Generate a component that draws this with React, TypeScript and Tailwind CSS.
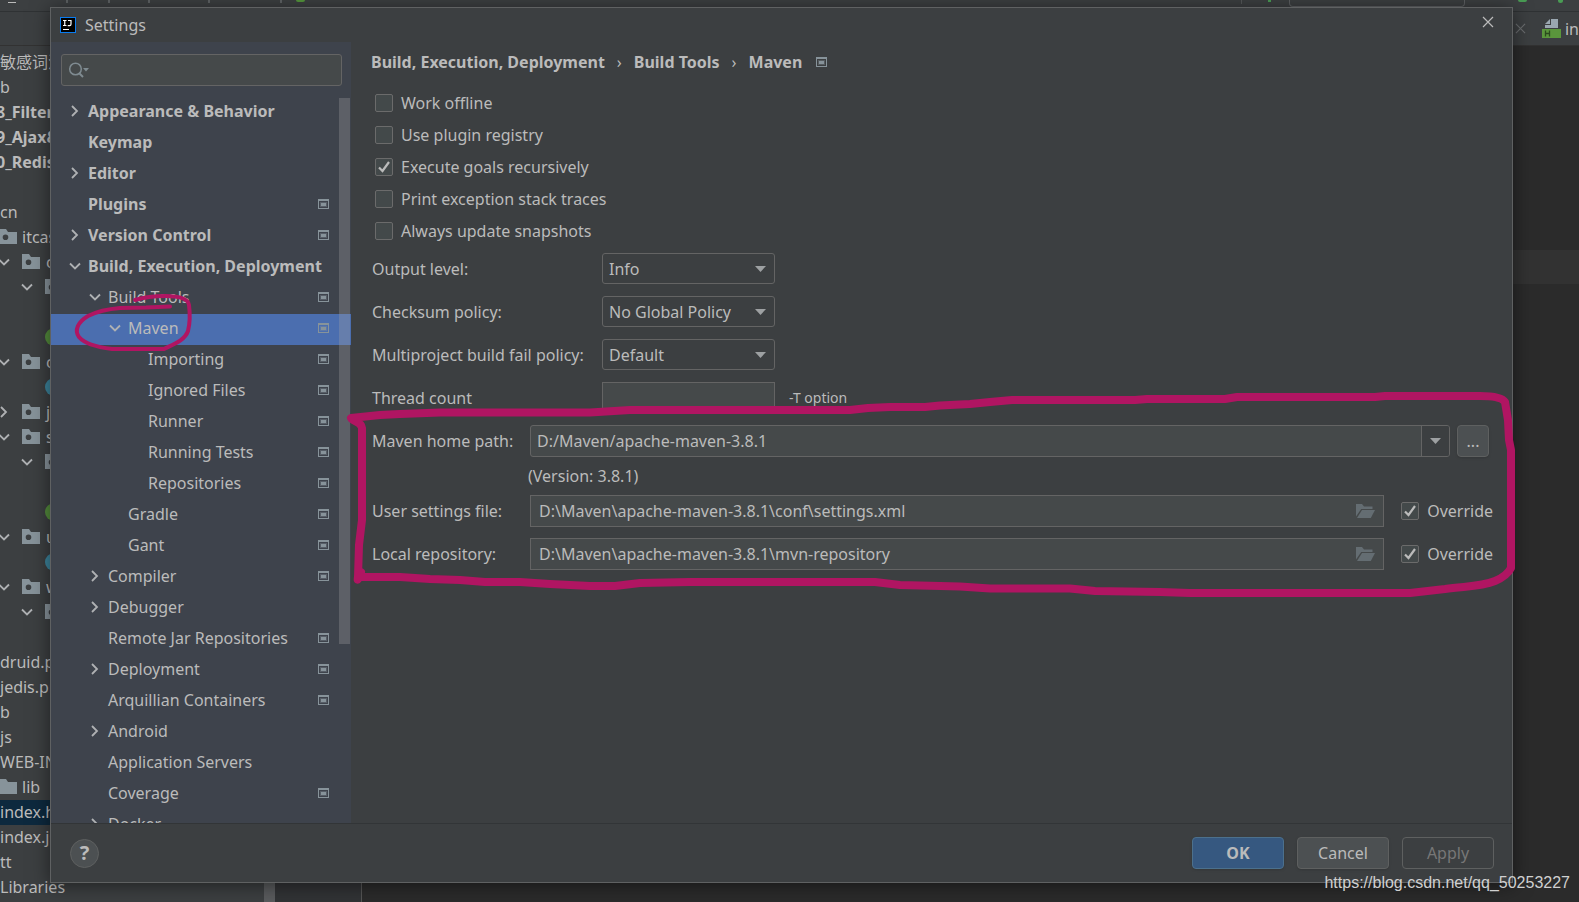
import type { ReactNode } from "react";

type TreeItem = {
  label: string;
  level: 0 | 1 | 2 | 3;
  state?: "open" | "closed";
  badge?: boolean;
  selected?: boolean;
};

const settingsTree: TreeItem[] = [
  { label: "Appearance & Behavior", level: 0, state: "closed" },
  { label: "Keymap", level: 0 },
  { label: "Editor", level: 0, state: "closed" },
  { label: "Plugins", level: 0, badge: true },
  { label: "Version Control", level: 0, state: "closed", badge: true },
  { label: "Build, Execution, Deployment", level: 0, state: "open" },
  { label: "Build Tools", level: 1, state: "open", badge: true },
  { label: "Maven", level: 2, state: "open", badge: true, selected: true },
  { label: "Importing", level: 3, badge: true },
  { label: "Ignored Files", level: 3, badge: true },
  { label: "Runner", level: 3, badge: true },
  { label: "Running Tests", level: 3, badge: true },
  { label: "Repositories", level: 3, badge: true },
  { label: "Gradle", level: 2, badge: true },
  { label: "Gant", level: 2, badge: true },
  { label: "Compiler", level: 1, state: "closed", badge: true },
  { label: "Debugger", level: 1, state: "closed" },
  { label: "Remote Jar Repositories", level: 1, badge: true },
  { label: "Deployment", level: 1, state: "closed", badge: true },
  { label: "Arquillian Containers", level: 1, badge: true },
  { label: "Android", level: 1, state: "closed" },
  { label: "Application Servers", level: 1 },
  { label: "Coverage", level: 1, badge: true },
  { label: "Docker", level: 1, state: "closed" },
];

const levelPadding = ["pl-4", "pl-9", "pl-14", "pl-19"];

type ProjectItem = {
  kind: "text" | "bold" | "root" | "package" | "nested" | "leaf";
  label?: string;
  state?: "open" | "closed";
  color?: string;
  selected?: boolean;
};

const projectTree: ProjectItem[] = [
  { kind: "text", label: "敏感词汇" },
  { kind: "text", label: "b" },
  { kind: "bold", label: "8_Filter" },
  { kind: "bold", label: "9_Ajax&" },
  { kind: "bold", label: "0_Redis" },
  { kind: "text" },
  { kind: "text", label: "cn" },
  { kind: "root", label: "itcast" },
  { kind: "package", label: "c", state: "open" },
  { kind: "nested", state: "open" },
  { kind: "text" },
  { kind: "leaf", color: "bg-[#548c3c]" },
  { kind: "package", label: "c", state: "open" },
  { kind: "leaf", color: "bg-[#3c849c]" },
  { kind: "package", label: "j", state: "closed" },
  { kind: "package", label: "s", state: "open" },
  { kind: "nested", state: "open" },
  { kind: "text" },
  { kind: "leaf", color: "bg-[#548c3c]" },
  { kind: "package", label: "u", state: "open" },
  { kind: "leaf", color: "bg-[#3c849c]" },
  { kind: "package", label: "w", state: "open" },
  { kind: "nested", state: "open" },
  { kind: "text" },
  { kind: "text", label: "druid.properties" },
  { kind: "text", label: "jedis.properties" },
  { kind: "text", label: "b" },
  { kind: "text", label: "js" },
  { kind: "text", label: "WEB-INF" },
  { kind: "root", label: "lib" },
  { kind: "text", label: "index.html", selected: true },
  { kind: "text", label: "index.jsp" },
  { kind: "text", label: "tt" },
  { kind: "text", label: "Libraries" },
];

function Chevron({ state }: { state: "open" | "closed" }) {
  return (
    <svg viewBox="0 0 16 16" className="h-4 w-4 shrink-0" fill="none" stroke="#afb1b3" strokeWidth="1.8">
      {state === "open" ? <path d="M3 5.5 8 10.5 13 5.5" /> : <path d="M5 3 10 8 5 13" />}
    </svg>
  );
}

function ProjectBadge() {
  return (
    <svg viewBox="0 0 11 10" className="h-[10px] w-[11px] shrink-0" aria-hidden="true">
      <path fill="#87939a" fillRule="evenodd" d="M0 0h11v10H0zM1 2v7h9V2z" />
      <path fill="#87939a" fillOpacity="0.35" d="M2 3h7v5H2z" />
      <path fill="#87939a" d="M3 4h5v3H3z" />
    </svg>
  );
}

function FolderIcon({ dot = true }: { dot?: boolean }) {
  return (
    <svg viewBox="0 0 18 15" className="h-[15px] w-[18px] shrink-0" aria-hidden="true">
      <path
        fill="#87939a"
        fillRule="evenodd"
        d={
          dot
            ? "M0 0h7l2 3h9v12H0zM6.5 5.5a2.8 2.8 0 1 0 0 5.6 2.8 2.8 0 0 0 0-5.6z"
            : "M0 0h7l2 3h9v12H0z"
        }
      />
    </svg>
  );
}

function OpenFolderIcon() {
  return (
    <svg viewBox="0 0 19 15" className="h-[15px] w-[19px] shrink-0" aria-hidden="true">
      <path fill="#646d72" d="M0 1h6l2 2.5h8.5V6H5.200L0 13.500z" />
      <path fill="#646d72" d="M6 7h13l-4.200 8H1z" />
    </svg>
  );
}

function DownTriangle() {
  return (
    <svg viewBox="0 0 11 6" className="h-[6px] w-[11px]" aria-hidden="true">
      <path fill="#9da0a2" d="M0 0h11L5.500 6z" />
    </svg>
  );
}

function CloseIcon({ className }: { className?: string }) {
  return (
    <svg viewBox="0 0 12 12" className={className} fill="none" stroke="currentColor" strokeWidth="1.200">
      <path d="M1 1 11 11M11 1 1 11" />
    </svg>
  );
}

function ProjectRow({ item }: { item: ProjectItem }) {
  const row = "flex h-[25px] shrink-0 items-center whitespace-nowrap pb-[2px]";
  switch (item.kind) {
    case "root":
      return (
        <div className={`${row} -ml-px gap-[5px]`}>
          <FolderIcon dot={item.label !== "lib"} />
          {item.label}
        </div>
      );
    case "package":
      return (
        <div className={`${row} -ml-1 gap-[6px]`}>
          <div className="flex items-center gap-[10px]">
            <Chevron state={item.state ?? "open"} />
            <FolderIcon />
          </div>
          {item.label}
        </div>
      );
    case "nested":
      return (
        <div className={`${row} gap-[10px] pl-[19px]`}>
          <Chevron state="open" />
          <FolderIcon />
        </div>
      );
    case "leaf":
      return (
        <div className={`${row} pl-[45px]`}>
          <span className={`h-[18px] w-[18px] rounded-full ${item.color}`} />
        </div>
      );
    case "bold":
      return (
        <div className={`${row} font-bold`}>
          <span className="-ml-1">{item.label}</span>
        </div>
      );
    default:
      return <div className={`${row} ${item.selected ? "bg-[#0d293e]" : ""}`}>{item.label}</div>;
  }
}

function IdeBackground() {
  return (
    <div className="flex h-full flex-col">
      <div className="flex h-3 shrink-0 items-start border-b border-[#2f3234] bg-[#3c3f41]">
        <span className="mt-[2px] ml-2 h-px w-2 bg-[#bbbbbb]" />
        <span className="ml-[50px] h-[3px] w-[2px] bg-[#5f6365]" />
        <span className="ml-10 h-[3px] w-[2px] bg-[#5f6365]" />
        <span className="ml-[38px] h-[3px] w-[2px] bg-[#5f6365]" />
        <span className="ml-[58px] h-[3px] w-[2px] bg-[#5f6365]" />
        <span className="ml-[70px] h-[3px] w-[2px] bg-[#5f6365]" />
        <span className="ml-[14px] h-[2px] w-[9px] rounded-b-full bg-[#54953c]" />
        <span className="flex-1" />
        <span className="h-1 w-px bg-[#55585a]" />
        <span className="ml-[26px] h-[2px] w-[3px] bg-[#499c54]" />
        <span className="ml-[18px] h-[7px] w-[176px] rounded-b-sm border border-t-0 border-[#5e6163]" />
        <span className="ml-[53px] h-[2px] w-[9px] rounded-b-full bg-[#499c54]" />
        <span className="mr-4 ml-[31px] h-[3px] w-[5px] rounded-b-full bg-[#499c54]" />
      </div>
      <div className="flex h-[34px] shrink-0 items-center justify-end overflow-hidden border-b border-[#323232] bg-[#3c3f41]">
        <CloseIcon className="h-[11px] w-[11px] text-[#6b6e70]" />
        <svg viewBox="0 0 19 19" className="ml-4 h-[19px] w-[19px]" aria-hidden="true">
          <path fill="#9aa7b0" d="M9 0h7v9H3V6h6z" />
          <path fill="#9aa7b0" d="M8 0v5H3z" />
          <path fill="#5a963c" d="M0 10h19v9H0z" />
          <path stroke="#2c4a1e" strokeWidth="1.300" d="M3.500 11.500v6M7.500 11.500v6M3.500 14.500h4" />
        </svg>
        <span className="ml-1">in</span>
      </div>
      <div className="flex min-h-0 flex-1">
        <div className="flex w-[264px] flex-col overflow-hidden bg-[#3c3f41] pt-1">
          {projectTree.map((item, i) => (
            <ProjectRow key={i} item={item} />
          ))}
        </div>
        <div className="w-[11px] bg-[#595b5d]" />
        <div className="w-[87px] border-r border-[#555555] bg-[#313335]" />
        <div className="flex-1 bg-[#2b2b2b] pt-[204px]">
          <div className="h-[34px] bg-[#323232]" />
        </div>
      </div>
    </div>
  );
}

function SettingsRow({ item }: { item: TreeItem }) {
  return (
    <li
      className={`flex h-[31px] shrink-0 items-center gap-[5px] pr-[22px] pb-[3px] whitespace-nowrap ${levelPadding[item.level]} ${
        item.level === 0 ? "font-bold" : ""
      } ${item.selected ? "bg-[#4b6eaf]" : ""}`}
    >
      {item.state ? <Chevron state={item.state} /> : <span className="w-4 shrink-0" />}
      <span className="flex-1">{item.label}</span>
      {item.badge && <ProjectBadge />}
    </li>
  );
}

function CheckOption({ label, checked = false }: { label: string; checked?: boolean }) {
  return (
    <label className="flex h-8 items-center gap-2">
      <span className="grid shrink-0 place-items-center">
        <input
          type="checkbox"
          defaultChecked={checked}
          className="peer col-start-1 row-start-1 h-[18px] w-[18px] appearance-none rounded-[2px] border border-[#6b6b6b] bg-[#43494a]"
        />
        <svg
          viewBox="0 0 12 12"
          className="pointer-events-none invisible col-start-1 row-start-1 h-3 w-3 peer-checked:visible"
          fill="none"
          stroke="#bbbbbb"
          strokeWidth="2.200"
        >
          <path d="M1 6.500 4.500 10 11 1" />
        </svg>
      </span>
      {label}
    </label>
  );
}

function FormRow({ id, label, wide, children }: { id: string; label: string; wide?: boolean; children: ReactNode }) {
  return (
    <div className="flex h-[43px] items-center">
      <label htmlFor={id} className={`shrink-0 ${wide ? "w-[230px]" : "w-[158px]"}`}>
        {label}
      </label>
      {children}
    </div>
  );
}

function SelectField({ id, value }: { id: string; value: string }) {
  return (
    <div className="grid w-[173px] items-center">
      <select
        id={id}
        defaultValue={value}
        className="col-start-1 row-start-1 h-[31px] w-full appearance-none rounded-[3px] border border-[#646464] bg-[#3c3f41] pl-[6px]"
      >
        <option>{value}</option>
      </select>
      <span className="pointer-events-none col-start-1 row-start-1 mr-[9px] justify-self-end">
        <DownTriangle />
      </span>
    </div>
  );
}

function PathField({ id, value }: { id: string; value: string }) {
  return (
    <div className="mr-[17px] flex h-8 min-w-0 flex-1 items-center border border-[#646464] bg-[#45494a] pr-2">
      <input id={id} defaultValue={value} className="min-w-0 flex-1 bg-transparent pl-2 outline-none" />
      <button type="button" aria-label="Browse">
        <OpenFolderIcon />
      </button>
    </div>
  );
}

function MavenPanel() {
  return (
    <main className="min-w-0 flex-1 pt-[6px] pr-[19px] pl-[21px]">
      <nav className="-ml-px flex h-7 items-center gap-3 font-bold">
        <span>Build, Execution, Deployment</span>
        <span className="font-normal">›</span>
        <span>Build Tools</span>
        <span className="font-normal">›</span>
        <span>Maven</span>
        <span className="ml-[2px]">
          <ProjectBadge />
        </span>
      </nav>
      <div className="mt-[11px] ml-[3px]">
        <CheckOption label="Work offline" />
        <CheckOption label="Use plugin registry" />
        <CheckOption label="Execute goals recursively" checked />
        <CheckOption label="Print exception stack traces" />
        <CheckOption label="Always update snapshots" />
      </div>
      <FormRow id="output" label="Output level:" wide>
        <SelectField id="output" value="Info" />
      </FormRow>
      <FormRow id="checksum" label="Checksum policy:" wide>
        <SelectField id="checksum" value="No Global Policy" />
      </FormRow>
      <FormRow id="fail" label="Multiproject build fail policy:" wide>
        <SelectField id="fail" value="Default" />
      </FormRow>
      <FormRow id="threads" label="Thread count" wide>
        <input id="threads" className="h-[31px] w-[173px] border border-[#646464] bg-[#45494a] pl-[6px]" />
        <span className="ml-[14px] text-sm">-T option</span>
      </FormRow>
      <FormRow id="home" label="Maven home path:">
        <div className="flex h-8 min-w-0 flex-1 overflow-hidden rounded-[3px] border border-[#646464] bg-[#45494a]">
          <input
            id="home"
            defaultValue="D:/Maven/apache-maven-3.8.1"
            className="min-w-0 flex-1 bg-transparent pl-[6px] outline-none"
          />
          <button
            type="button"
            aria-label="Show paths"
            className="flex w-7 items-center justify-center border-l border-[#646464] bg-[#3c3f41]"
          >
            <DownTriangle />
          </button>
        </div>
        <button
          type="button"
          className="mr-1 ml-[7px] h-8 w-8 rounded-[4px] border border-[#5e6060] bg-[#4c5052] shadow-sm"
        >
          ...
        </button>
      </FormRow>
      <p className="flex h-[27px] items-center pl-[156px]">(Version: 3.8.1)</p>
      <FormRow id="user-settings" label="User settings file:">
        <PathField id="user-settings" value="D:\Maven\apache-maven-3.8.1\conf\settings.xml" />
        <CheckOption label="Override" checked />
      </FormRow>
      <FormRow id="local-repo" label="Local repository:">
        <PathField id="local-repo" value="D:\Maven\apache-maven-3.8.1\mvn-repository" />
        <CheckOption label="Override" checked />
      </FormRow>
    </main>
  );
}

function SettingsDialog() {
  return (
    <div
      role="dialog"
      aria-label="Settings"
      className="absolute top-[7px] right-[66px] bottom-[19px] left-[50px] flex flex-col border border-[#5f6162] bg-[#3c3f41] shadow-[0_2px_18px_rgba(0,0,0,0.5)]"
    >
      <header className="flex h-[34px] shrink-0 items-center pr-[18px] pl-[9px]">
        <svg viewBox="0 0 16 16" className="h-4 w-4" aria-hidden="true">
          <path fill="#0a7cf0" d="M0 0h16v16H0z" />
          <path fill="#000000" d="M1 1h14v14H1z" />
          <path stroke="#ffffff" strokeWidth="1.200" fill="none" d="M3 3.500h3.500M4.750 3.500v5M3 8.500h3.500M8 3.500h3v3.700q0 1.400-1.400 1.400H7.700M3 12.500h6" />
        </svg>
        <h1 className="ml-[9px] flex-1">Settings</h1>
        <button type="button" aria-label="Close" className="pb-[6px]">
          <CloseIcon className="h-3 w-3 text-[#bbbbbb]" />
        </button>
      </header>
      <div className="flex min-h-0 flex-1">
        <aside className="flex w-[300px] shrink-0 flex-col bg-[#3e434c]">
          <div className="mr-[9px] ml-[10px] mt-3 flex h-8 shrink-0 items-center rounded-[3px] border border-[#646464] bg-[#45494a] pl-[6px]">
            <svg viewBox="0 0 22 16" className="h-4 w-[22px] shrink-0" fill="none" aria-hidden="true">
              <circle cx="7.500" cy="7" r="5.800" stroke="#7f8b91" strokeWidth="1.500" />
              <path stroke="#7f8b91" strokeWidth="2" d="M11 11l4 4" />
              <path fill="#7f8b91" d="M15 6h6l-3 3.500z" />
            </svg>
            <input aria-label="Search settings" className="min-w-0 flex-1 bg-transparent outline-none" />
          </div>
          <div className="relative mt-[11px] min-h-0 flex-1 overflow-hidden">
            <ul>
              {settingsTree.map((item) => (
                <SettingsRow key={item.label} item={item} />
              ))}
            </ul>
            <div className="absolute top-px right-px h-[546px] w-[11px] bg-[#a6a6a6]/30" />
          </div>
        </aside>
        <MavenPanel />
      </div>
      <footer className="flex h-[59px] shrink-0 items-center gap-[13px] border-t border-[#323537] pr-[18px] pl-[19px]">
        <button
          type="button"
          className="mr-auto h-[29px] w-[29px] rounded-full border border-[#5e6060] bg-[#4c5052] text-xl leading-6 font-bold"
        >
          ?
        </button>
        <button type="button" className="h-8 w-[92px] rounded-[4px] border border-[#4c708c] bg-[#365880] font-bold shadow-sm">
          OK
        </button>
        <button type="button" className="h-8 w-[92px] rounded-[4px] border border-[#5e6060] bg-[#4c5052] shadow-sm">
          Cancel
        </button>
        <button type="button" disabled className="h-8 w-[92px] rounded-[4px] border border-[#5e6060] text-[#777777]">
          Apply
        </button>
      </footer>
    </div>
  );
}

// hand-drawn highlights over the Maven node and the path fields
function Markup() {
  return (
    <svg
      className="pointer-events-none absolute inset-0 h-full w-full"
      fill="none"
      stroke="#b01562"
      strokeLinecap="round"
      strokeLinejoin="round"
      aria-hidden="true"
    >
      <path
        strokeWidth="4"
        d="M135 300 C145 297 158 296 165 296 C178 296 188 298 189 305 C190 313 190 323 188 331 C185 340 174 344 164 349 H112 C96 347 84 343 79 337 C74 330 78 322 88 316 C98 311 108 309 120 308 L146 307.500 L170 306.500"
      />
      <path
        strokeWidth="8"
        d="M361 572 C358 578 357 583 358 577 L359 545 L362 520 V428 C361 421 353 422 351 418 L380 415 L400 414 L440 412.500 H590 L630 410 H850 L868 408 L890 407 H925 L940 405.500 L970 404 L990 402 L1012 400 H1135 L1147 399 H1225 L1237 397 H1375 L1385 396 H1480 Q1501 396 1505 402 L1508 420 L1509 440 L1511 450 V568 Q1507 576 1495 581 C1480 587 1465 586 1445 589 L1410 593 H1190 L1160 592 L1095 591 L1070 588.500 H990 L960 586.500 L900 585 L875 582 H690 L640 583 L615 586 H590 L550 584 L520 582 H485 L460 580 L430 579 L400 577 H361"
      />
    </svg>
  );
}

export default function App() {
  return (
    <div className="relative h-screen overflow-hidden bg-[#2b2b2b] font-['Noto_Sans','Noto_Sans_CJK_SC',sans-serif] text-base text-[#bbbbbb]">
      <IdeBackground />
      <SettingsDialog />
      <Markup />
      <p className="pointer-events-none absolute right-[9px] bottom-[7px] font-['Liberation_Sans',sans-serif] text-base text-[#d0d0d0]">
        https://blog.csdn.net/qq_50253227
      </p>
    </div>
  );
}
